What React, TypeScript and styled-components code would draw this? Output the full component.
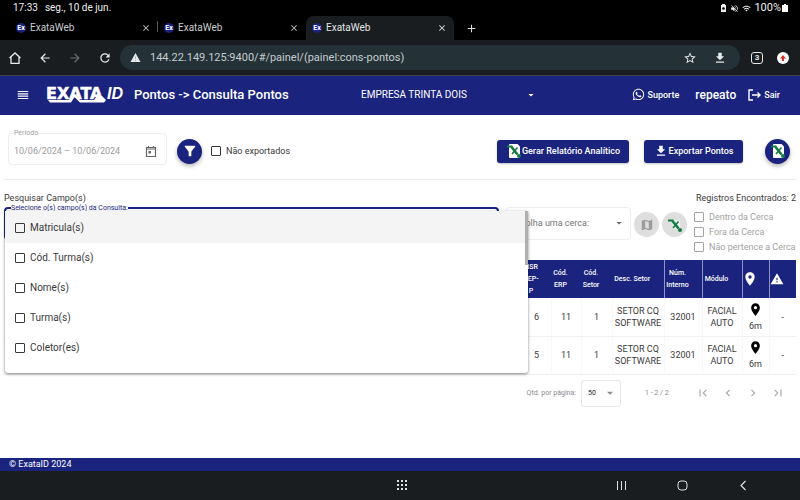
import React from "react";
import styled, { createGlobalStyle } from "styled-components";
import {
  MdArrowBack,
  MdArrowDropDown,
  MdArrowForward,
  MdChevronLeft,
  MdChevronRight,
  MdClose,
  MdFileDownload,
  MdFilterAlt,
  MdFirstPage,
  MdLastPage,
  MdLocationOn,
  MdMap,
  MdRefresh,
  MdStarBorder,
  MdWarning,
  MdAdd,
  MdVolumeOff,
  MdWifi,
  MdReorder,
} from "react-icons/md";
import { FaWhatsapp } from "react-icons/fa";

const navy = "#1a237e";

const GlobalStyle = createGlobalStyle`
  *, *::before, *::after { box-sizing: border-box; }
  body { margin: 0; background: #fff; color: #3a3a3a; font-family: Roboto, "Liberation Sans", sans-serif; font-size: 9px; line-height: 12px; }
  button, select, input { font: inherit; color: inherit; margin: 0; }
  button { border: 0; padding: 0; background: none; cursor: pointer; }
  svg { display: block; flex: none; }
  a { color: inherit; text-decoration: none; }
  h1, p { margin: 0; }
`;

const Page = styled.div`
  display: flex;
  flex-direction: column;
  min-height: 100vh;
`;

const StatusBar = styled.div`
  display: flex;
  align-items: center;
  justify-content: space-between;
  height: 16px;
  padding: 0 12px 0 13px;
  background: #000;
  color: #eee;
  font-size: 10px;
`;

const StatusGroup = styled.div<{ $gap: number }>`
  display: flex;
  align-items: center;
  gap: ${(p) => p.$gap}px;
`;

const Battery = styled(StatusGroup)`
  font-size: 11px;
`;

const TabStrip = styled.div`
  display: flex;
  align-items: stretch;
  height: 24px;
  padding-left: 10px;
  background: #000;
  color: #c9cccf;
`;

const Tab = styled.div<{ $active?: boolean; $divided?: boolean }>`
  display: flex;
  align-items: center;
  gap: 4px;
  width: 148px;
  padding: 0 7px 0 6px;
  border-radius: 8px 8px 0 0;
  font-size: 10px;
  background: ${(p) => (p.$active ? "#1a1d20" : "transparent")};
  color: ${(p) => (p.$active ? "#e3e5e7" : "inherit")};
  position: relative;
  &::after {
    content: "";
    position: absolute;
    right: 0;
    top: 5px;
    width: 1px;
    height: 11px;
    background: ${(p) => (p.$divided ? "#55585a" : "transparent")};
  }
`;

const Favicon = styled.span`
  width: 10px;
  height: 10px;
  border-radius: 50%;
  background: ${navy};
  color: #fff;
  font-size: 7px;
  line-height: 10px;
  font-weight: 700;
  text-align: center;
`;

const TabTitle = styled.span`
  flex: 1;
`;

const NewTab = styled.button`
  padding: 0 11px;
`;

const BrowserBar = styled.div`
  display: flex;
  align-items: center;
  height: 36px;
  padding: 0 11px 0 8px;
  background: #1a1d20;
  color: #e6e8ea;
  border-bottom: 1px solid #3b4048;
`;

const BrowserNav = styled.nav`
  display: flex;
  gap: 16px;
  width: 112px;
`;

const NavButton = styled.button<{ $dim?: boolean }>`
  width: 14px;
  opacity: ${(p) => (p.$dim ? 0.4 : 1)};
`;

const AddressBar = styled.div`
  display: flex;
  flex: 1;
  align-items: center;
  height: 25px;
  padding: 0 13px 0 10px;
  border-radius: 13px;
  background: #243237;
`;

const Address = styled.input`
  flex: 1;
  min-width: 0;
  margin-left: 9px;
  padding: 0;
  border: 0;
  outline: 0;
  background: none;
  color: #c5cbce;
  font-size: 11px;
`;

const AddressActions = styled.div`
  display: flex;
  gap: 16px;
`;

const TabCount = styled.button`
  width: 12px;
  height: 12px;
  margin: 0 14px 0 11px;
  border: 1px solid #e6e8ea;
  border-radius: 3px;
  font-size: 8px;
  line-height: 10px;
  font-weight: 700;
`;

const Header = styled.header`
  display: flex;
  align-items: center;
  height: 39px;
  padding: 0 20px 2px 16px;
  background: ${navy};
  color: #fff;
`;

const Brand = styled.a`
  margin: 0 8px 0 16px;
`;

const Title = styled.h1`
  width: 227px;
  font-size: 13px;
  font-weight: 500;
`;

const SelectWrap = styled.div`
  display: flex;
  align-items: center;
  position: relative;
`;

const SelectArrow = styled.span<{ $right: number }>`
  position: absolute;
  right: ${(p) => p.$right}px;
  pointer-events: none;
`;

const CompanySelect = styled.select`
  width: 178px;
  padding: 0;
  border: 0;
  outline: 0;
  appearance: none;
  background: none;
  font-size: 10px;
`;

const HeaderLinks = styled.nav`
  display: flex;
  align-items: center;
  gap: 12px;
  margin-left: auto;
`;

const HeaderLink = styled.a`
  display: flex;
  align-items: center;
  gap: 3px;
  font-size: 9px;
  font-weight: 500;
`;

const UserName = styled.span`
  margin-left: 4px;
  font-size: 12px;
  font-weight: 500;
`;

const Main = styled.main`
  flex: 1;
  padding: 0 4px;
`;

const Toolbar = styled.section`
  display: flex;
  align-items: center;
  height: 65px;
  padding: 8px 6px 0 4px;
  border-bottom: 1px solid #ececec;
`;

const Outlined = styled.fieldset<{ $active?: boolean }>`
  height: 36px;
  min-width: 0;
  margin: 0;
  padding: 0 5px;
  border: ${(p) => (p.$active ? `2px solid ${navy}` : "1px solid #ededed")};
  border-radius: 4px;
`;

const PeriodField = styled(Outlined)`
  width: 159px;
  margin-bottom: 8px;
`;

const Legend = styled.legend<{ $active?: boolean }>`
  padding: 0;
  color: ${(p) => (p.$active ? navy : "#a0a0a0")};
  font-size: 7px;
  line-height: 8px;
`;

const DateRow = styled.div`
  display: flex;
  align-items: center;
  justify-content: space-between;
  height: 28px;
  padding-right: 4px;
  color: #9b9b9b;
`;

const DateInput = styled.input`
  width: 110px;
  padding: 0;
  border: 0;
  outline: 0;
  background: none;
`;

const RoundButton = styled.button<{ $light?: boolean }>`
  display: flex;
  align-items: center;
  justify-content: center;
  flex: none;
  width: 25px;
  height: 25px;
  border-radius: 50%;
  background: ${(p) => (p.$light ? "#dedede" : navy)};
  color: ${(p) => (p.$light ? "#9c9c9c" : "#fff")};
  box-shadow: ${(p) => (p.$light ? "none" : "0 2px 4px rgba(0, 0, 0, 0.3)")};
`;

const FilterSlot = styled.div`
  margin: 0 9px 0 10px;
`;

const CheckLabel = styled.label<{ $muted?: boolean }>`
  display: flex;
  align-items: center;
  gap: 5px;
  color: ${(p) => (p.$muted ? "#a3a3a3" : "inherit")};
`;

const CheckBox = styled.input.attrs({ type: "checkbox" })`
  appearance: none;
  flex: none;
  width: 10px;
  height: 10px;
  border: 1px solid currentColor;
  border-radius: 1px;
  &:checked { background: ${navy}; }
`;

const Actions = styled.div`
  display: flex;
  align-items: center;
  gap: 15px;
  margin-left: auto;
`;

const ActionButton = styled.button<{ $wide?: boolean }>`
  display: flex;
  align-items: center;
  justify-content: center;
  gap: ${(p) => (p.$wide ? 0 : 1)}px;
  width: ${(p) => (p.$wide ? 132 : 99)}px;
  height: 23px;
  margin-right: ${(p) => (p.$wide ? 0 : 7)}px;
  border-radius: 3px;
  background: ${navy};
  color: #fff;
  font-weight: 500;
  box-shadow: 0 1px 2px rgba(0, 0, 0, 0.25);
`;

const Captions = styled.div`
  display: flex;
  justify-content: space-between;
  padding-top: 12px;
`;

const SearchRow = styled.section`
  display: flex;
  gap: 7px;
  height: 56px;
`;

const FieldPicker = styled.div`
  flex: 1;
  min-width: 0;
  position: relative;
`;

const OptionPanel = styled.ul`
  position: absolute;
  z-index: 2;
  top: 7px;
  left: 1px;
  width: calc(100% + 28px);
  height: 162px;
  margin: 0;
  padding: 0;
  overflow: hidden;
  list-style: none;
  border-radius: 0 0 3px 3px;
  background: #fff;
  box-shadow: 0 1px 3px rgba(0, 0, 0, 0.5);
  &::after {
    content: "";
    position: absolute;
    top: 0;
    right: 0;
    width: 3px;
    height: 54px;
    background: #b0b0b0;
  }
`;

const Option = styled.li<{ $focused?: boolean }>`
  display: flex;
  align-items: center;
  height: 30px;
  padding: ${(p) => (p.$focused ? "2px" : "0")} 0 0 10px;
  font-size: 10px;
  background: ${(p) => (p.$focused ? "#f4f4f4" : "transparent")};
  &:first-child { height: 32px; }
`;

const FencePicker = styled.div`
  width: 125px;
  height: 33px;
  margin-top: 3px;
  padding: 3px 4px 0;
  border: 1px solid #ededed;
  border-radius: 4px;
`;

const FenceSelect = styled.select`
  width: 100%;
  height: 24px;
  padding: 0;
  border: 0;
  outline: 0;
  appearance: none;
  background: none;
  color: #757575;
`;

const FenceButtons = styled.div`
  display: flex;
  gap: 3px;
  margin: 8px 0 0 -4px;
`;

const FenceFilters = styled.div`
  display: flex;
  flex-direction: column;
  gap: 3px;
  width: 102px;
  padding-top: 7px;
  white-space: nowrap;
`;

const Table = styled.table`
  width: 100%;
  table-layout: fixed;
  border-collapse: collapse;
`;

const Column = styled.col<{ $width?: number }>`
  width: ${(p) => (p.$width ? `${p.$width}px` : "auto")};
`;

const HeadCell = styled.th`
  height: 38px;
  padding: 0 11px 0 0;
  background: ${navy};
  color: #fff;
  font-size: 7px;
  font-weight: 500;
  white-space: pre;
  &:nth-child(n + 6) { border-left: 1px solid #8f94c4; }
`;

const Cell = styled.td`
  height: 38px;
  padding: 0;
  text-align: center;
  white-space: pre-line;
  border-bottom: 1px solid #efefef;
  border-left: 1px solid #f8f8f8;
`;

const CenterStack = styled.div`
  display: flex;
  flex-direction: column;
  align-items: center;
  gap: 3px;
`;

const Paginator = styled.div`
  display: flex;
  align-items: center;
  justify-content: flex-end;
  padding: 5px 11px 0 0;
  color: #8a8a8a;
  font-size: 7px;
`;

const PageSize = styled.select`
  width: 40px;
  height: 27px;
  margin-left: 5px;
  padding: 0 6px;
  border: 1px solid #e6e6e6;
  border-radius: 3px;
  appearance: none;
  background: none;
  color: #222;
`;

const PageRange = styled.span`
  width: 51px;
  margin-left: 24px;
`;

const PageButtons = styled.div`
  display: flex;
  gap: 11px;
  color: #a8a8a8;
`;

const Footer = styled.footer`
  height: 13px;
  padding-left: 9px;
  background: ${navy};
  color: #fff;
`;

const DeviceNav = styled.nav`
  display: grid;
  grid-template-columns: 1fr 24px 1fr;
  align-items: center;
  height: 29px;
  padding-left: 4px;
  background: #1a1d20;
  color: #e0e0e0;
`;

const DeviceButtons = styled.div`
  display: flex;
  justify-content: flex-end;
  gap: 50px;
  padding-right: 51px;
`;

const Centered = styled.button`
  display: flex;
  justify-content: center;
  grid-column: 2;
`;

function Logo() {
  return (
    <svg width="80" height="22" viewBox="0 0 80 22" fill="#fff" role="img" aria-label="EXATAID">
      <text x="0" y="15" fontFamily="DejaVu Sans" fontWeight="700" fontSize="16" stroke="#fff" strokeWidth="0.500">EXATA</text>
      <text x="61" y="15" fontFamily="Liberation Sans" fontWeight="700" fontStyle="italic" fontSize="16">ID</text>
      <path d="M2 16h21l3-4h5l3 4h14l3-4h5l4 4-2 2.500H34L28.500 13 25 18.500H4z" />
    </svg>
  );
}

function HomeIcon() {
  return (
    <svg width="14" height="14" viewBox="0 0 14 14" fill="none" stroke="currentColor" strokeWidth="1.300">
      <path d="M1.500 7L7 2l5.500 5M3 6v6.300h8V6" />
    </svg>
  );
}

function CalendarIcon() {
  return (
    <svg width="12" height="13" viewBox="0 0 12 13" fill="none" stroke="#666" strokeWidth="1.200">
      <path d="M1.500 2.500h9v9h-9zM1.500 4h9M3.500 1v2M8.500 1v2" />
      <path d="M3.500 6h2.500v2.500H3.500z" fill="#666" stroke="none" />
    </svg>
  );
}

function ExcelIcon({ bare }: { bare?: boolean }) {
  return (
    <svg width="16" height="16" viewBox="0 0 16 16" fill="none">
      {bare ? (
        <path d="M5 3h7l1 2v7H6z" fill="#f0f0f0" />
      ) : (
        <path d="M4 1h7.500L14 3.500V14q0 1-1 1H4q-1 0-1-1V2q0-1 1-1z" fill="#fff" />
      )}
      <path d="M1 3.500h5.500" stroke="#137b42" strokeWidth="2" />
      <path d="M5.500 4l6 7.500" stroke="#137b42" strokeWidth="2.600" />
      <path d="M11.500 4.500L6 11" stroke="#137b42" strokeWidth="1.500" />
      <circle cx="13" cy="13" r="2" fill="#137b42" />
    </svg>
  );
}

function CloseTab() {
  return (
    <button aria-label="Fechar aba">
      <MdClose size={10} />
    </button>
  );
}

const options = ["Matricula(s)", "Cód. Turma(s)", "Nome(s)", "Turma(s)", "Coletor(es)"];
const fences = ["Dentro da Cerca", "Fora da Cerca", "Não pertence a Cerca"];
const columnWidths = [29, 30, 31, 52, 38, 40, 27, 27];
const headings = ["NSR\nREP-\nP", "Cód.\nERP", "Cód.\nSetor", "Desc. Setor", "Núm.\nInterno", "Módulo"];
const records = ["6", "5"];

export default function App() {
  return (
    <Page>
      <GlobalStyle />
      <StatusBar>
        <StatusGroup $gap={7}>
          <span>17:33</span>
          <span>seg., 10 de jun.</span>
        </StatusGroup>
        <StatusGroup $gap={3}>
          <svg width="7" height="8" viewBox="0 0 7 8">
            <path d="M2 0h3v1h1v7H1V1h1z" fill="#eee" />
            <circle cx="3.500" cy="4.500" r="1.300" fill="#000" />
          </svg>
          <MdVolumeOff size={9} />
          <MdWifi size={9} />
          <Battery $gap={1}>
            <span>100%</span>
            <svg width="6" height="8" viewBox="0 0 6 8"><path d="M2 0h2v1h2v7H0V1h2z" fill="#fff" /></svg>
          </Battery>
        </StatusGroup>
      </StatusBar>

      <TabStrip>
        {[0, 1, 2].map((i) => (
          <Tab key={i} $active={i === 2} $divided={i === 0}>
            <Favicon>Ex</Favicon>
            <TabTitle>ExataWeb</TabTitle>
            <CloseTab />
          </Tab>
        ))}
        <NewTab aria-label="Nova aba"><MdAdd size={13} color="#ddd" /></NewTab>
      </TabStrip>

      <BrowserBar>
        <BrowserNav>
          <NavButton aria-label="Início"><HomeIcon /></NavButton>
          <NavButton aria-label="Voltar"><MdArrowBack size={14} /></NavButton>
          <NavButton aria-label="Avançar" $dim><MdArrowForward size={14} /></NavButton>
          <NavButton aria-label="Recarregar"><MdRefresh size={14} /></NavButton>
        </BrowserNav>
        <AddressBar>
          <svg width="11" height="11" viewBox="0 0 11 11">
            <path d="M5.500 1L10.500 10H.5z" fill="#e6e8ea" />
            <path d="M5.500 4.500v2.500M5.500 8v1" stroke="#9aa2a6" strokeWidth="0.800" />
          </svg>
          <Address aria-label="Endereço" defaultValue="144.22.149.125:9400/#/painel/(painel:cons-pontos)" />
          <AddressActions>
            <NavButton aria-label="Favorito"><MdStarBorder size={14} /></NavButton>
            <NavButton aria-label="Baixar"><MdFileDownload size={14} /></NavButton>
          </AddressActions>
        </AddressBar>
        <TabCount>3</TabCount>
        <button aria-label="Atualizar">
          <svg width="12" height="12" viewBox="0 0 12 12">
            <circle cx="6" cy="6" r="6" fill="#fff" />
            <path d="M6 3L9 6.500H7V9H5V6.500H3z" fill="#d93025" />
          </svg>
        </button>
      </BrowserBar>

      <Header>
        <button aria-label="Menu"><MdReorder size={14} /></button>
        <Brand href="#"><Logo /></Brand>
        <Title>Pontos -&gt; Consulta Pontos</Title>
        <SelectWrap>
          <CompanySelect aria-label="Empresa"><option>EMPRESA TRINTA DOIS</option></CompanySelect>
          <SelectArrow $right={2}><MdArrowDropDown size={12} /></SelectArrow>
        </SelectWrap>
        <HeaderLinks>
          <HeaderLink href="#"><FaWhatsapp size={13} />Suporte</HeaderLink>
          <UserName>repeato</UserName>
          <HeaderLink href="#">
            <svg width="13" height="12" viewBox="0 0 13 12" fill="none" stroke="#fff" strokeWidth="1.400">
              <path d="M5 1H1v10h4M4 6h8M9.500 3.500L12 6 9.500 8.500" />
            </svg>
            Sair
          </HeaderLink>
        </HeaderLinks>
      </Header>

      <Main>
        <Toolbar>
          <PeriodField>
            <Legend>Período</Legend>
            <DateRow>
              <DateInput aria-label="Período" defaultValue="10/06/2024 – 10/06/2024" />
              <button aria-label="Abrir calendário"><CalendarIcon /></button>
            </DateRow>
          </PeriodField>
          <FilterSlot>
            <RoundButton aria-label="Filtrar"><MdFilterAlt size={16} /></RoundButton>
          </FilterSlot>
          <CheckLabel><CheckBox />Não exportados</CheckLabel>
          <Actions>
            <ActionButton $wide><ExcelIcon />Gerar Relatório Analítico</ActionButton>
            <ActionButton><MdFileDownload size={14} />Exportar Pontos</ActionButton>
            <RoundButton aria-label="Exportar planilha"><ExcelIcon /></RoundButton>
          </Actions>
        </Toolbar>

        <Captions>
          <span>Pesquisar Campo(s)</span>
          <span>Registros Encontrados: 2</span>
        </Captions>

        <SearchRow>
          <FieldPicker>
            <Outlined $active>
              <Legend $active>Selecione o(s) campo(s) da Consulta:</Legend>
            </Outlined>
            <OptionPanel>
              {options.map((name, i) => (
                <Option key={name} $focused={i === 0}>
                  <CheckLabel><CheckBox />{name}</CheckLabel>
                </Option>
              ))}
            </OptionPanel>
          </FieldPicker>
          <FencePicker>
            <SelectWrap>
              <FenceSelect aria-label="Cerca"><option>Escolha uma cerca:</option></FenceSelect>
              <SelectArrow $right={1}><MdArrowDropDown size={12} color="#666" /></SelectArrow>
            </SelectWrap>
          </FencePicker>
          <FenceButtons>
            <RoundButton $light aria-label="Mapa"><MdMap size={14} /></RoundButton>
            <RoundButton $light aria-label="Planilha de cercas"><ExcelIcon bare /></RoundButton>
          </FenceButtons>
          <FenceFilters>
            {fences.map((name) => (
              <CheckLabel key={name} $muted><CheckBox />{name}</CheckLabel>
            ))}
          </FenceFilters>
        </SearchRow>

        <Table>
          <colgroup>
            <Column />
            {columnWidths.map((width, i) => <Column key={i} $width={width} />)}
          </colgroup>
          <thead>
            <tr>
              <HeadCell />
              {headings.map((name) => <HeadCell key={name}>{name}</HeadCell>)}
              <HeadCell><CenterStack><MdLocationOn size={16} /></CenterStack></HeadCell>
              <HeadCell><CenterStack><MdWarning size={14} /></CenterStack></HeadCell>
            </tr>
          </thead>
          <tbody>
            {records.map((nsr) => (
              <tr key={nsr}>
                <Cell />
                <Cell>{nsr}</Cell>
                <Cell>11</Cell>
                <Cell>1</Cell>
                <Cell>{"SETOR CQ\nSOFTWARE"}</Cell>
                <Cell>32001</Cell>
                <Cell>{"FACIAL\nAUTO"}</Cell>
                <Cell><CenterStack><MdLocationOn size={15} color="#000" />6m</CenterStack></Cell>
                <Cell>-</Cell>
              </tr>
            ))}
          </tbody>
        </Table>

        <Paginator>
          <label htmlFor="page-size">Qtd. por página:</label>
          <SelectWrap>
            <PageSize id="page-size"><option>50</option></PageSize>
            <SelectArrow $right={4}><MdArrowDropDown size={14} /></SelectArrow>
          </SelectWrap>
          <PageRange>1 - 2 / 2</PageRange>
          <PageButtons>
            <button aria-label="Primeira página"><MdFirstPage size={14} /></button>
            <button aria-label="Página anterior"><MdChevronLeft size={14} /></button>
            <button aria-label="Próxima página"><MdChevronRight size={14} /></button>
            <button aria-label="Última página"><MdLastPage size={14} /></button>
          </PageButtons>
        </Paginator>
      </Main>

      <Footer>© ExataID 2024</Footer>
      <DeviceNav>
        <Centered aria-label="Aplicativos">
          <svg width="11" height="11" viewBox="0 0 11 11" fill="currentColor">
            {[0, 4, 8].map((y) => [0, 4, 8].map((x) => <rect key={`${x}-${y}`} x={x} y={y} width="2" height="2" />))}
          </svg>
        </Centered>
        <DeviceButtons>
          <button aria-label="Recentes">
            <svg width="11" height="11" viewBox="0 0 11 11" stroke="currentColor"><path d="M1.500 1v9M5.500 1v9M9.500 1v9" /></svg>
          </button>
          <button aria-label="Tela inicial">
            <svg width="11" height="11" viewBox="0 0 11 11" fill="none" stroke="currentColor"><rect x="1" y="1" width="9" height="9" rx="3" /></svg>
          </button>
          <button aria-label="Retornar">
            <svg width="11" height="11" viewBox="0 0 11 11" fill="none" stroke="currentColor" strokeWidth="1.200"><path d="M7.500 1L3 5.500 7.500 10" /></svg>
          </button>
        </DeviceButtons>
      </DeviceNav>
    </Page>
  );
}
